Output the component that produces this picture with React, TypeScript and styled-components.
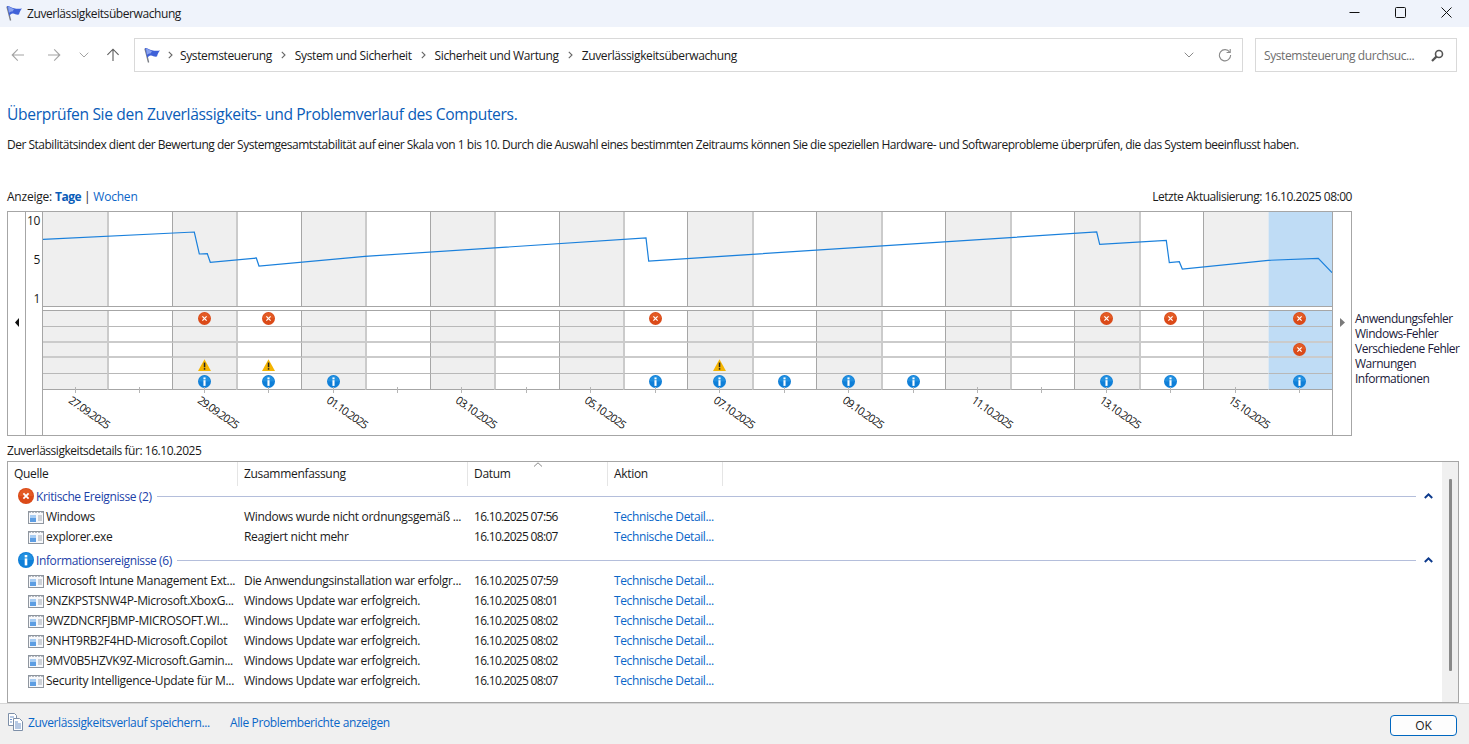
import React from "react";
import styled, { createGlobalStyle } from "styled-components";

const Global = createGlobalStyle`
  html, body { margin: 0; padding: 0; background: #fff; overflow: hidden; }
  body { font-family: "Open Sans", "Noto Sans", sans-serif; font-size: 12px; color: #1a1a1a; }
  * { box-sizing: border-box; }
`;

const Page = styled.div`
  width: 1469px; height: 744px; display: flex; flex-direction: column; overflow: hidden;
  letter-spacing: -0.42px;
`;
const TitleBar = styled.header`
  height: 27px; flex: none; background: #eff3fb; display: flex; align-items: center; padding-left: 6px;
`;
const TitleText = styled.span`margin-left: 4px; color: #1a1a1a; line-height: 16px;`;
const WinControls = styled.div`margin-left: auto; display: flex; height: 100%;`;
const WinButton = styled.div`width: 46px; height: 25px; display: flex; align-items: center; justify-content: center;`;

const Toolbar = styled.div`height: 53px; flex: none; display: flex; align-items: flex-start; padding: 11px 12px 0 0;`;
const NavButton = styled.div<{ $w: number }>`
  width: ${p => p.$w}px; height: 34px; display: flex; align-items: center; justify-content: center; flex: none;
`;
const AddressBar = styled.div`
  margin-left: 5px; width: 1109px; height: 34px; flex: none; border: 1px solid #d9d9d9; display: flex; align-items: center; padding-left: 9px;
`;
const Crumb = styled.span`color: #1a1a1a; white-space: nowrap; letter-spacing: -0.37px;`;
const CrumbSep = styled.span<{ $w?: number }>`width: ${p => p.$w ?? 23}px; display: flex; justify-content: center; flex: none;`;
const AddressEnd = styled.div`margin-left: auto; display: flex; align-items: center; gap: 24px; padding-right: 10px;`;
const SearchBox = styled.div`
  margin-left: 12px; width: 202px; height: 34px; flex: none; border: 1px solid #d9d9d9; display: flex; align-items: center;
  justify-content: space-between; padding: 0 12px 0 8px; color: #6e6e6e;
`;

const Main = styled.main`flex: none; height: 623px; padding: 23px 11px 0 7px; display: flex; flex-direction: column;`;
const Heading = styled.h1`margin: 0; font-size: 15.6px; font-weight: 400; line-height: 22px; color: #0a5cb8; letter-spacing: -0.34px;`;
const Description = styled.p`margin: 12px 0 0; line-height: 16px; color: #1a1a1a; white-space: nowrap; letter-spacing: -0.495px;`;
const ViewRow = styled.div`margin-top: 36px; width: 1345px; display: flex; justify-content: space-between; line-height: 16px; letter-spacing: -0.47px;`;
const ViewLabel = styled.span`letter-spacing: -0.22px;`;
const ViewBold = styled.b`color: #0a5cb8; font-weight: 700; letter-spacing: -0.45px;`;
const Link = styled.a`color: #0a66c8; text-decoration: none; white-space: nowrap;`;

const ChartArea = styled.section`margin-top: 6px; display: flex; height: 225px;`;
const ChartBox = styled.div`
  width: 1345px; height: 225px; flex: none; border: 1px solid #a6a6a6; display: grid; grid-template-columns: 18px 17px 1289px 19px;
`;
const ScrollCell = styled.div<{ $right?: boolean }>`
  display: flex; align-items: center; justify-content: center; padding-bottom: 2px;
  border-right: ${p => (p.$right ? "none" : "1px solid #a6a6a6")};
  border-left: ${p => (p.$right ? "1px solid #a6a6a6" : "none")};
`;
const YAxis = styled.div`
  height: 95px; padding: 1px 2px 0 0; display: flex; flex-direction: column; justify-content: space-between; align-items: flex-end; line-height: 16px; width: 16px;
`;
const YCell = styled.div`border-right: 1px solid #a6a6a6;`;
const Plot = styled.div`display: flex; flex-direction: column; min-width: 0;`;
const LinePanel = styled.div`
  position: relative; height: 95px; flex: none; display: grid; grid-template-columns: repeat(20, 1fr); border-bottom: 1px solid #a6a6a6;
`;
const Column = styled.div<{ $i: number }>`
  background: ${p => (p.$i === 19 ? "#bfdcf5" : p.$i % 2 === 0 ? "#efefef" : "#fff")};
  border-left: ${p => (p.$i === 0 ? "none" : p.$i === 19 ? "1px solid #dfe9f2" : p.$i % 2 === 0 ? "1px solid #a6a6a6" : "2px solid #cbcbcb")};
`;
const LineOverlay = styled.svg`position: absolute; left: 0; top: 0; width: 1289px; height: 95px;`;
const EventsGrid = styled.div`
  margin-top: 3px; border-top: 1px solid #a6a6a6; flex: none; display: grid;
  grid-template-columns: repeat(20, 1fr); grid-auto-rows: 15.8px;
`;
const EventCell = styled(Column)<{ $line: string }>`
  display: flex; align-items: center; justify-content: center; border-bottom: ${p => p.$line};
  padding-right: ${p => (p.$i === 0 ? 0 : p.$i % 2 === 0 ? 1 : 2)}px;
`;
const Axis = styled.div`flex: 1; display: grid; grid-template-columns: repeat(20, 1fr);`;
const AxisCell = styled.div`display: flex; flex-direction: column; align-items: center;`;
const Tick = styled.div`width: 1px; height: 6px; margin-top: -3px; background: #b5b5b5; flex: none;`;
const DateLabel = styled.div`
  width: 0; height: 0; white-space: nowrap; margin-left: -2px; margin-top: 0; font-size: 11px; letter-spacing: -0.9px; line-height: 14px;
  color: #111; transform: rotate(35deg); transform-origin: 0 0;
`;
const Legend = styled.ul`
  list-style: none; margin: 0 0 0 3px; padding: 100px 0 0; width: 106px; line-height: 15px; color: #201a3a; white-space: nowrap; letter-spacing: -0.48px;
`;

const DetailsLabel = styled.div`margin-top: 7px; line-height: 16px; letter-spacing: -0.46px;`;
const ListBox = styled.section`
  margin-top: 2px; width: 1452px; height: 242px; flex: none; border: 1px solid #a6a6a6; display: flex;
`;
const ListMain = styled.div`flex: 1; min-width: 0; letter-spacing: -0.31px;`;
const Scrollbar = styled.div`width: 16px; flex: none; background: #f0f0f0; display: flex; justify-content: center; padding-top: 17px;`;
const Thumb = styled.div`width: 3px; height: 192px; background: #8a8a8a; border-radius: 1px;`;
const Grid = styled.div`display: grid; grid-template-columns: 230px 230px 140px 115px 1fr;`;
const HeaderRow = styled(Grid)`height: 24px;`;
const HeaderCell = styled.div`
  position: relative; padding-left: 6px; line-height: 24px; border-right: 1px solid #e5e5e5;
  &:last-child { border-right: none; }
`;
const SortMark = styled.svg`position: absolute; left: 65px; top: 0;`;
const GroupRow = styled.div<{ $first?: boolean }>`
  height: 20px; margin: ${p => (p.$first ? "0" : "3px")} 0 1px; padding: 0 3px 0 10px; display: flex; align-items: center; color: #1c3fa8; letter-spacing: -0.38px;
`;
const GroupTitle = styled.span`margin-left: 2px; white-space: nowrap;`;
const GroupLine = styled.div`flex: 1; height: 1px; background: #b4bedb; margin-left: 5px;`;
const GroupChevron = styled.div`width: 22px; margin-left: 1px; display: flex; justify-content: center;`;
const DataRow = styled(Grid)`height: 20px; line-height: 20px; align-items: start;`;
const SourceCell = styled.div`height: 20px; display: flex; align-items: center; padding-left: 20px; white-space: nowrap;`;
const SourceName = styled.span`margin-left: 2px;`;
const TextCell = styled.div`padding-left: 6px; white-space: nowrap;`;
const DateCell = styled(TextCell)`letter-spacing: -0.7px;`;
const ActionCell = styled(TextCell)`color: #0a66c8; letter-spacing: -0.38px;`;

const Footer = styled.footer`
  flex: 1; background: #f0f0f0; border-top: 1px solid #d6d6d6; display: flex; align-items: flex-start; padding: 8px 12px 0 8px;
`;
const FooterLinks = styled.div`display: flex; align-items: center; height: 18px; margin-top: 1px;`;
const SaveLink = styled(Link)`margin-left: 5px; letter-spacing: -0.36px;`;
const AllLink = styled(Link)`margin-left: 20px; letter-spacing: -0.36px;`;
const OkButton = styled.button`
  margin-left: auto; margin-top: 3px; width: 67px; height: 21px; background: #fdfdfd; border: 1px solid #0067c0; border-radius: 4px;
  font: inherit; color: #1a1a1a; padding: 0;
`;
const WarnSvg = styled.svg`margin-bottom: 2px;`;

/* ---------- drawings ---------- */
const Flag = () => (
  <svg width="17" height="17" viewBox="0 0 17 17">
    <path d="M1 1.5 L4.6 15.5" stroke="#7b7f86" strokeWidth="1.4" />
    <path d="M1 1 C3 0.5 5 2.4 8 3.2 C10.5 3.9 13.5 3.9 16 3.4 C14.5 5 13.6 7 13 9.6 C10.5 10.2 9 8.8 7 8.6 C5.4 8.4 4.4 9.4 3.4 11 Z" fill="#3f61d8" />
    <path d="M2 1.6 C4 2 6 3.6 8 4.2 L6.5 6.6 C5 6.4 3.8 7 3 8 Z" fill="#8aa2ee" />
  </svg>
);
const Arrow = ({ color, dir }: { color: string; dir: "left" | "right" | "up" }) => (
  <svg width="14" height="14" viewBox="0 0 14 14" fill="none" stroke={color} strokeWidth="1.1"
    style={{ transform: dir === "left" ? "none" : dir === "right" ? "scaleX(-1)" : "rotate(90deg)" }}>
    <path d="M13 7H1.2M6.8 1.4L1.2 7l5.6 5.6" />
  </svg>
);
const Chevron = ({ color = "#8a8a8a" }: { color?: string }) => (
  <svg width="10" height="6" viewBox="0 0 10 6" fill="none" stroke={color} strokeWidth="1"><path d="M0.7 0.7L5 5l4.3-4.3" /></svg>
);
const CrumbChevron = () => (
  <svg width="5" height="8" viewBox="0 0 5 8" fill="none" stroke="#666" strokeWidth="1.1"><path d="M0.8 0.8L4 4 .8 7.2" /></svg>
);
const Refresh = () => (
  <svg width="14" height="14" viewBox="0 0 14 14" fill="none" stroke="#8a8a8a" strokeWidth="1.1">
    <path d="M11.7 4.2A5.6 5.6 0 1 0 12.6 7" /><path d="M12.2 0.9v3.6H8.6" />
  </svg>
);
const Magnifier = () => (
  <svg width="13" height="13" viewBox="0 0 13 13" fill="none" stroke="#555" >
    <circle cx="8" cy="5" r="3.5" strokeWidth="1.6" /><path d="M5.4 7.6L1 12" strokeWidth="2.2" />
  </svg>
);
const ErrorIcon = ({ size = 13 }: { size?: number }) => (
  <svg width={size} height={size} viewBox="0 0 16 16">
    <circle cx="8" cy="8" r="8" fill="#db4a18" />
    <path d="M1 8a7 7 0 0 1 14 0" fill="#e8672f" opacity="0.6" />
    <path d="M5.4 5.4l5.2 5.2M10.6 5.4l-5.2 5.2" stroke="#fff" strokeWidth={size > 14 ? 1.8 : 1.5} />
  </svg>
);
const InfoIcon = ({ size = 13 }: { size?: number }) => (
  <svg width={size} height={size} viewBox="0 0 16 16">
    <circle cx="8" cy="8" r="8" fill="#0f7fd8" />
    <path d="M1 8a7 7 0 0 1 14 0" fill="#2f9be6" opacity="0.6" />
    <rect x="6.7" y="3" width="2.6" height="2.4" fill="#fff" /><rect x="6.7" y="6.4" width="2.6" height="7" fill="#fff" />
  </svg>
);
const WarnIcon = () => (
  <WarnSvg width="13" height="12" viewBox="0 0 13 12">
    <path d="M6.5 0.3L13 12H0Z" fill="#f4b400" />
    <rect x="5.8" y="3.6" width="1.5" height="4.6" fill="#222" /><rect x="5.8" y="9.1" width="1.5" height="1.6" fill="#222" />
  </WarnSvg>
);
const RowIcon = () => (
  <svg width="16" height="13" viewBox="0 0 16 13" style={{ flex: "none" }}>
    <rect x="0.5" y="0.5" width="15" height="12" fill="#f7f8fb" stroke="#8f969f" />
    <path d="M1 1.5h14" stroke="#b4b9c0" strokeDasharray="2 1" />
    <rect x="2" y="4" width="6" height="7" fill="#5d9de2" /><rect x="2" y="4" width="6" height="3" fill="#a9cdf2" />
    <path d="M10 5h4M10 7h4M10 9h4" stroke="#a4aab2" />
  </svg>
);
const CollapseIcon = () => (
  <svg width="9" height="6" viewBox="0 0 9 6" fill="none" stroke="#0d3a8c" strokeWidth="2"><path d="M0.8 5L4.5 1.4 8.2 5" /></svg>
);
const PagesIcon = () => (
  <svg width="15" height="18" viewBox="0 0 15 18" fill="#fff" stroke="#7d8fa8">
    <path d="M0.5 0.5h6l2 2v10h-8z" /><path d="M5.5 5.5h6l3 3v9h-9z" />
    <path d="M2 4h4M2 6.5h2M2 9h2M7 9h3M7 11h6M7 13h6M7 15h6" stroke="#6f93c8" />
  </svg>
);

/* ---------- data ---------- */
const columns = Array.from({ length: 20 }, (_, i) => i);
const linePoints: [number, number][] = [
  [43, 239.3], [194.3, 232], [199.3, 254], [207.3, 253.7], [210.3, 262.3], [256.3, 258], [259, 266], [365, 256.3],
  [646, 238], [648.7, 261], [1096.7, 232], [1099.7, 244.3], [1166.3, 240.3], [1169.3, 262.7], [1179.3, 261.7],
  [1182.3, 269], [1268.3, 260.3], [1318.3, 258.3], [1332, 272.7],
];
const polyline = linePoints.map(([x, y]) => `${x - 43},${y - 212}`).join(" ");
const eventRows: { kind: "error" | "warn" | "info" | "none"; cols: number[]; line: string }[] = [
  { kind: "error", cols: [2, 3, 9, 16, 17, 19], line: "1px solid #b8b8b8" },
  { kind: "none", cols: [], line: "2px solid #cbcbcb" },
  { kind: "error", cols: [19], line: "2px solid #cbcbcb" },
  { kind: "warn", cols: [2, 3, 10], line: "1px solid #b8b8b8" },
  { kind: "info", cols: [2, 3, 4, 9, 10, 11, 12, 13, 16, 17, 19], line: "1px solid #a6a6a6" },
];
const dateLabels: Record<number, string> = {
  0: "27.09.2025", 2: "29.09.2025", 4: "01.10.2025", 6: "03.10.2025", 8: "05.10.2025",
  10: "07.10.2025", 12: "09.10.2025", 14: "11.10.2025", 16: "13.10.2025", 18: "15.10.2025",
};
const legend = ["Anwendungsfehler", "Windows-Fehler", "Verschiedene Fehler", "Warnungen", "Informationen"];
const crumbs = ["Systemsteuerung", "System und Sicherheit", "Sicherheit und Wartung", "Zuverlässigkeitsüberwachung"];
const critical = [
  ["Windows", "Windows wurde nicht ordnungsgemäß ...", "16.10.2025 07:56"],
  ["explorer.exe", "Reagiert nicht mehr", "16.10.2025 08:07"],
];
const info = [
  ["Microsoft Intune Management Ext...", "Die Anwendungsinstallation war erfolgr...", "16.10.2025 07:59"],
  ["9NZKPSTSNW4P-Microsoft.XboxG...", "Windows Update war erfolgreich.", "16.10.2025 08:01"],
  ["9WZDNCRFJBMP-MICROSOFT.WI...", "Windows Update war erfolgreich.", "16.10.2025 08:02"],
  ["9NHT9RB2F4HD-Microsoft.Copilot", "Windows Update war erfolgreich.", "16.10.2025 08:02"],
  ["9MV0B5HZVK9Z-Microsoft.Gamin...", "Windows Update war erfolgreich.", "16.10.2025 08:02"],
  ["Security Intelligence-Update für M...", "Windows Update war erfolgreich.", "16.10.2025 08:07"],
];

const Rows = ({ rows }: { rows: string[][] }) => (
  <>
    {rows.map(r => (
      <DataRow key={r[0]}>
        <SourceCell><RowIcon /><SourceName>{r[0]}</SourceName></SourceCell>
        <TextCell>{r[1]}</TextCell>
        <DateCell>{r[2]}</DateCell>
        <ActionCell>Technische Detail...</ActionCell>
        <div />
      </DataRow>
    ))}
  </>
);

export default function App() {
  return (
    <Page>
      <Global />
      <TitleBar>
        <Flag />
        <TitleText>Zuverlässigkeitsüberwachung</TitleText>
        <WinControls>
          <WinButton><svg width="11" height="11" viewBox="0 0 11 11"><path d="M0.5 5.5h10" stroke="#111" /></svg></WinButton>
          <WinButton><svg width="11" height="11" viewBox="0 0 11 11"><rect x="0.5" y="0.5" width="10" height="10" rx="1" fill="none" stroke="#111" /></svg></WinButton>
          <WinButton><svg width="11" height="11" viewBox="0 0 11 11"><path d="M0.5 0.5l10 10M10.5 0.5l-10 10" stroke="#111" /></svg></WinButton>
        </WinControls>
      </TitleBar>
      <Toolbar>
        <NavButton $w={36}><Arrow color="#a3a3a3" dir="left" /></NavButton>
        <NavButton $w={35}><Arrow color="#a3a3a3" dir="right" /></NavButton>
        <NavButton $w={26}><Chevron color="#a3a3a3" /></NavButton>
        <NavButton $w={32}><Arrow color="#5a5a5a" dir="up" /></NavButton>
        <AddressBar>
          <Flag />
          <CrumbSep $w={19}><CrumbChevron /></CrumbSep>
          {crumbs.map((c, i) => (
            <React.Fragment key={c}>
              {i > 0 && <CrumbSep><CrumbChevron /></CrumbSep>}
              <Crumb>{c}</Crumb>
            </React.Fragment>
          ))}
          <AddressEnd><Chevron /><Refresh /></AddressEnd>
        </AddressBar>
        <SearchBox>Systemsteuerung durchsuc...<Magnifier /></SearchBox>
      </Toolbar>
      <Main>
        <Heading>Überprüfen Sie den Zuverlässigkeits- und Problemverlauf des Computers.</Heading>
        <Description>
          Der Stabilitätsindex dient der Bewertung der Systemgesamtstabilität auf einer Skala von 1 bis 10. Durch die Auswahl eines bestimmten Zeitraums können Sie die speziellen Hardware- und Softwareprobleme überprüfen, die das System beeinflusst haben.
        </Description>
        <ViewRow>
          <ViewLabel>Anzeige: <ViewBold>Tage</ViewBold> | <Link>Wochen</Link></ViewLabel>
          <span>Letzte Aktualisierung: 16.10.2025 08:00</span>
        </ViewRow>
        <ChartArea>
          <ChartBox>
            <ScrollCell>
              <svg width="4" height="9" viewBox="0 0 4 9"><path d="M4 0v9L0 4.5z" fill="#111" /></svg>
            </ScrollCell>
            <YCell>
              <YAxis><span>10</span><span>5</span><span>1</span></YAxis>
            </YCell>
            <Plot>
              <LinePanel>
                {columns.map(i => <Column key={i} $i={i} />)}
                <LineOverlay viewBox="0 0 1289 95">
                  <polyline points={polyline} fill="none" stroke="#1a80dc" strokeWidth="1.2" />
                </LineOverlay>
              </LinePanel>
              <EventsGrid>
                {eventRows.map((row, r) =>
                  columns.map(i => (
                    <EventCell key={`${r}-${i}`} $i={i} $line={row.line}>
                      {row.cols.includes(i) && row.kind === "error" && <ErrorIcon />}
                      {row.cols.includes(i) && row.kind === "warn" && <WarnIcon />}
                      {row.cols.includes(i) && row.kind === "info" && <InfoIcon />}
                    </EventCell>
                  ))
                )}
              </EventsGrid>
              <Axis>
                {columns.map(i => (
                  <AxisCell key={i}>
                    <Tick />
                    {dateLabels[i] && <DateLabel>{dateLabels[i]}</DateLabel>}
                  </AxisCell>
                ))}
              </Axis>
            </Plot>
            <ScrollCell $right>
              <svg width="5" height="9" viewBox="0 0 5 9"><path d="M0 0v9l5-4.5z" fill="#7a7a7a" /></svg>
            </ScrollCell>
          </ChartBox>
          <Legend>{legend.map(l => <li key={l}>{l}</li>)}</Legend>
        </ChartArea>
        <DetailsLabel>Zuverlässigkeitsdetails für: 16.10.2025</DetailsLabel>
        <ListBox>
          <ListMain>
            <HeaderRow>
              <HeaderCell>Quelle</HeaderCell>
              <HeaderCell>Zusammenfassung</HeaderCell>
              <HeaderCell>
                Datum
                <SortMark width="10" height="5" viewBox="0 0 10 5" fill="none" stroke="#8a8a8a"><path d="M1 4.5L5 .8l4 3.7" /></SortMark>
              </HeaderCell>
              <HeaderCell>Aktion</HeaderCell>
              <div />
            </HeaderRow>
            <GroupRow $first>
              <ErrorIcon size={16} />
              <GroupTitle>Kritische Ereignisse (2)</GroupTitle>
              <GroupLine />
              <GroupChevron><CollapseIcon /></GroupChevron>
            </GroupRow>
            <Rows rows={critical} />
            <GroupRow>
              <InfoIcon size={16} />
              <GroupTitle>Informationsereignisse (6)</GroupTitle>
              <GroupLine />
              <GroupChevron><CollapseIcon /></GroupChevron>
            </GroupRow>
            <Rows rows={info} />
          </ListMain>
          <Scrollbar><Thumb /></Scrollbar>
        </ListBox>
      </Main>
      <Footer>
        <FooterLinks>
          <PagesIcon />
          <SaveLink>Zuverlässigkeitsverlauf speichern...</SaveLink>
          <AllLink>Alle Problemberichte anzeigen</AllLink>
        </FooterLinks>
        <OkButton>OK</OkButton>
      </Footer>
    </Page>
  );
}
